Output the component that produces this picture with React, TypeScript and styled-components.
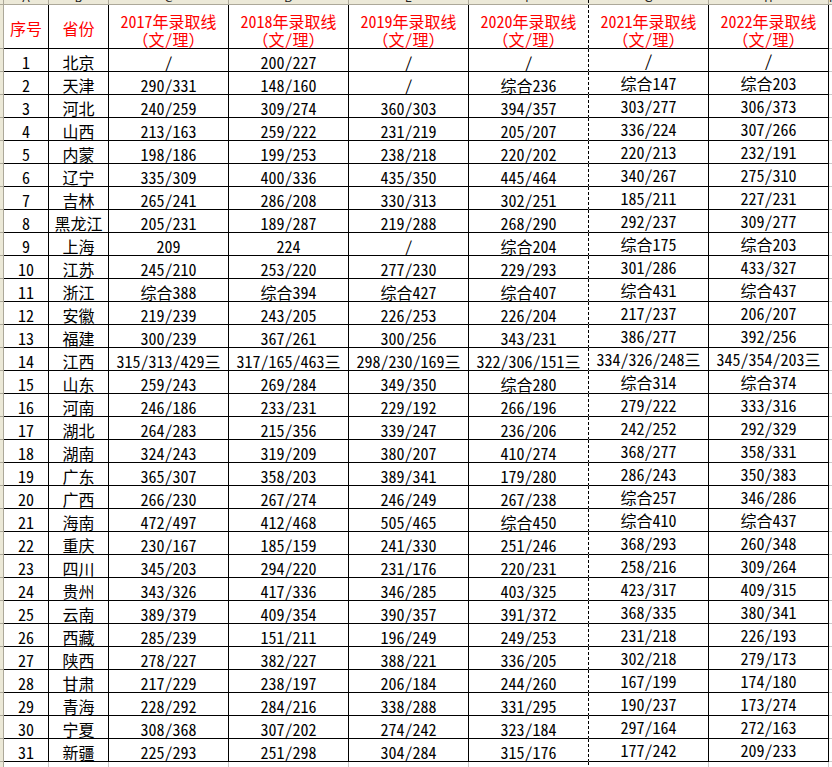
import React from "react";
import styled, { createGlobalStyle, css } from "styled-components";

const Global = createGlobalStyle`
  html, body { margin: 0; padding: 0; background: #ffffff; }
  body {
    font-family: "Noto Sans Mono CJK SC", "Noto Sans CJK SC", "DejaVu Sans Mono", monospace;
    font-size: 16px;
    font-weight: 350;
    color: #000;
  }
`;

const STRIP = "#ece9d8";
const STRIP_LINE = "#aca899";
const GRID = "#c8c8c8";

const dashedRight = css`
  border-right: 1px solid transparent;
  background-image: linear-gradient(to bottom, #000 0 3px, transparent 3px 5px);
  background-size: 1px 5px;
  background-repeat: repeat-y;
  background-position: right top;
  background-origin: border-box;
`;

const Sheet = styled.div`
  display: grid;
  grid-template-columns: 4px 45px 60px repeat(6, 120px) 4px;
  grid-template-rows: 5px 44px repeat(31, 23px) 1fr;
  width: 832px;
  height: 767px;
  overflow: hidden;
  box-sizing: border-box;
  & > * { box-sizing: border-box; min-width: 0; }
`;

const ColLetter = styled.div<{ $dashed?: boolean }>`
  background-color: ${STRIP};
  border-bottom: 1px solid ${STRIP_LINE};
  border-right: 1px solid ${STRIP_LINE};
  overflow: hidden;
  display: flex;
  align-items: flex-end;
  justify-content: center;
  font-family: "DejaVu Sans", sans-serif;
  font-weight: 400;
  font-size: 11px;
  line-height: 11px;
  color: #222;
  ${(p) => p.$dashed && dashedRight}
`;

const RowStub = styled.div`
  background-color: ${STRIP};
  border-right: 1px solid ${STRIP_LINE};
  border-bottom: 1px solid ${STRIP_LINE};
`;

const HeadCell = styled.div<{ $dashed?: boolean; $single?: boolean }>`
  border-right: 1px solid #000;
  border-bottom: 1px solid #000;
  color: #ff0000;
  display: flex;
  align-items: ${(p) => (p.$single ? "center" : "flex-end")};
  justify-content: center;
  text-align: center;
  padding-top: ${(p) => (p.$single ? "2px" : "0")};
  line-height: 18px;
  white-space: nowrap;
  ${(p) => p.$dashed && dashedRight}
`;

const Cell = styled.div<{ $dashed?: boolean; $raise?: boolean }>`
  border-right: 1px solid #000;
  border-bottom: 1px solid #000;
  display: flex;
  align-items: flex-end;
  justify-content: center;
  line-height: 16px;
  padding-bottom: ${(p) => (p.$raise ? "3px" : "1px")};
  white-space: nowrap;
  ${(p) => p.$dashed && dashedRight}
`;

const Spill = styled.div`
  border-bottom: 1px solid ${GRID};
`;

const Tail = styled.div<{ $dashed?: boolean }>`
  border-right: 1px solid ${GRID};
  ${(p) => p.$dashed && dashedRight}
`;

const TailStub = styled.div`
  background-color: ${STRIP};
  border-right: 1px solid ${STRIP_LINE};
`;

const years = ["2017", "2018", "2019", "2020", "2021", "2022"];
const letters = ["A", "B", "C", "D", "E", "F", "G", "H"];

const rows: string[][] = [
  ["北京", "/", "200/227", "/", "/", "/", "/"],
  ["天津", "290/331", "148/160", "/", "综合236", "综合147", "综合203"],
  ["河北", "240/259", "309/274", "360/303", "394/357", "303/277", "306/373"],
  ["山西", "213/163", "259/222", "231/219", "205/207", "336/224", "307/266"],
  ["内蒙", "198/186", "199/253", "238/218", "220/202", "220/213", "232/191"],
  ["辽宁", "335/309", "400/336", "435/350", "445/464", "340/267", "275/310"],
  ["吉林", "265/241", "286/208", "330/313", "302/251", "185/211", "227/231"],
  ["黑龙江", "205/231", "189/287", "219/288", "268/290", "292/237", "309/277"],
  ["上海", "209", "224", "/", "综合204", "综合175", "综合203"],
  ["江苏", "245/210", "253/220", "277/230", "229/293", "301/286", "433/327"],
  ["浙江", "综合388", "综合394", "综合427", "综合407", "综合431", "综合437"],
  ["安徽", "219/239", "243/205", "226/253", "226/204", "217/237", "206/207"],
  ["福建", "300/239", "367/261", "300/256", "343/231", "386/277", "392/256"],
  ["江西", "315/313/429三", "317/165/463三", "298/230/169三", "322/306/151三", "334/326/248三", "345/354/203三"],
  ["山东", "259/243", "269/284", "349/350", "综合280", "综合314", "综合374"],
  ["河南", "246/186", "233/231", "229/192", "266/196", "279/222", "333/316"],
  ["湖北", "264/283", "215/356", "339/247", "236/206", "242/252", "292/329"],
  ["湖南", "324/243", "319/209", "380/207", "410/274", "368/277", "358/331"],
  ["广东", "365/307", "358/203", "389/341", "179/280", "286/243", "350/383"],
  ["广西", "266/230", "267/274", "246/249", "267/238", "综合257", "346/286"],
  ["海南", "472/497", "412/468", "505/465", "综合450", "综合410", "综合437"],
  ["重庆", "230/167", "185/159", "241/330", "251/246", "368/293", "260/348"],
  ["四川", "345/203", "294/220", "231/176", "220/231", "258/216", "309/264"],
  ["贵州", "343/326", "417/336", "346/285", "403/325", "423/317", "409/315"],
  ["云南", "389/379", "409/354", "390/357", "391/372", "368/335", "380/341"],
  ["西藏", "285/239", "151/211", "196/249", "249/253", "231/218", "226/193"],
  ["陕西", "278/227", "382/227", "388/221", "336/205", "302/218", "279/173"],
  ["甘肃", "217/229", "238/197", "206/184", "244/260", "167/199", "174/180"],
  ["青海", "228/292", "284/216", "338/288", "331/295", "190/237", "173/274"],
  ["宁夏", "308/368", "307/202", "274/242", "323/184", "297/164", "272/163"],
  ["新疆", "225/293", "251/298", "304/284", "315/176", "177/242", "209/233"],
];

// index within the six year columns whose right edge is the dashed page break
const DASHED = 3;

export default function App() {
  return (
    <>
      <Global />
      <Sheet>
        <ColLetter />
        {letters.map((l, i) => (
          <ColLetter key={l} $dashed={i - 2 === DASHED}>
            {l}
          </ColLetter>
        ))}
        <ColLetter>I</ColLetter>

        <RowStub />
        <HeadCell $single>序号</HeadCell>
        <HeadCell $single>省份</HeadCell>
        {years.map((y, i) => (
          <HeadCell key={y} $dashed={i === DASHED}>
            <div>
              {y}年录取线
              <br />
              （文/理）
            </div>
          </HeadCell>
        ))}
        <Spill />

        {rows.map((r, ri) => (
          <React.Fragment key={r[0]}>
            <RowStub />
            <Cell>{ri + 1}</Cell>
            <Cell>{r[0]}</Cell>
            {r.slice(1).map((v, ci) => (
              <Cell key={ci} $dashed={ci === DASHED} $raise={ci >= 4}>
                {v}
              </Cell>
            ))}
            <Spill />
          </React.Fragment>
        ))}

        <TailStub />
        <Tail />
        <Tail />
        {years.map((y, i) => (
          <Tail key={y} $dashed={i === DASHED} />
        ))}
        <Tail />
      </Sheet>
    </>
  );
}
